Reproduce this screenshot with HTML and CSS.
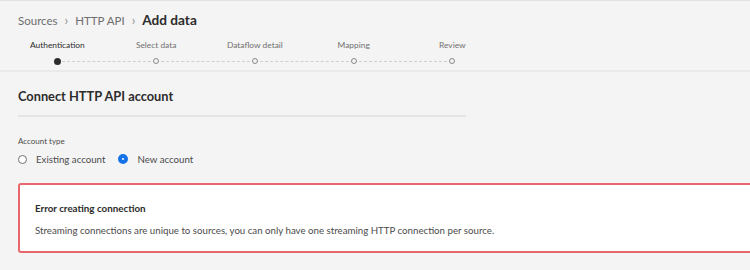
FILE: index.html
```html
<!DOCTYPE html>
<html lang="en">
<head>
    <meta charset="UTF-8">
    <title>Add data</title>
    <link rel="stylesheet" href="styles.css">
</head>
<body>
    <div class="header">
        <div class="breadcrumbs">
            <span class="crumb">Sources</span>
            <span class="chevron">&#8250;</span>
            <span class="crumb">HTTP API</span>
            <span class="chevron">&#8250;</span>
            <span class="crumb current">Add data</span>
        </div>
        <div class="steps">
            <div class="step active">
                <div class="step-label">Authentication</div>
                <div class="step-dot"></div>
            </div>
            <div class="step">
                <div class="step-label">Select data</div>
                <div class="step-dot"></div>
            </div>
            <div class="step">
                <div class="step-label">Dataflow detail</div>
                <div class="step-dot"></div>
            </div>
            <div class="step">
                <div class="step-label">Mapping</div>
                <div class="step-dot"></div>
            </div>
            <div class="step last">
                <div class="step-label">Review</div>
                <div class="step-dot"></div>
            </div>
        </div>
    </div>

    <div class="content">
        <h2 class="section-title">Connect HTTP API account</h2>

        <div class="field-label">Account type</div>
        <div class="radio-group">
            <label class="radio">
                <span class="radio-circle"></span>
                Existing account
            </label>
            <label class="radio checked">
                <span class="radio-circle"></span>
                New account
            </label>
        </div>

        <div class="error-box">
            <div class="error-title">Error creating connection</div>
            <div class="error-text">Streaming connections are unique to sources, you can only have one streaming HTTP connection per source.</div>
        </div>
    </div>
</body>
</html>
```

FILE: styles.css
```css
body {
    margin: 0;
    font-family: 'Lato', 'Open Sans', sans-serif;
    background-color: #f4f4f4;
    color: #2c2c2c;
    overflow: hidden;
}
.header {
    border-top: 1px solid #e1e1e1;
    border-bottom: 2px solid #eaeaea;
    height: 72px;
    box-sizing: border-box;
    padding: 10px 18px 0;
}
.breadcrumbs {
    display: flex;
    align-items: center;
    font-size: 11.5px;
    height: 18px;
}
.crumb {
    color: #6e6e6e;
}
.crumb.current {
    color: #2c2c2c;
    font-weight: bold;
    font-size: 13.6px;
}
.chevron {
    color: #8e8e8e;
    margin: 0 7px;
    font-size: 13px;
}
.steps {
    display: flex;
    margin-top: 11px;
    margin-left: -10px;
}
.step {
    width: 98.75px;
    display: flex;
    flex-direction: column;
    align-items: center;
    position: relative;
}
.step-label {
    font-size: 8.4px;
    color: #707070;
    height: 12px;
    white-space: nowrap;
}
.step.active .step-label {
    color: #2c2c2c;
}
.step-dot {
    margin-top: 6px;
    width: 4px;
    height: 4px;
    border: 1.5px solid #8a8a8a;
    border-radius: 50%;
    background: #f4f4f4;
    position: relative;
    z-index: 1;
}
.step.active .step-dot {
    width: 7px;
    height: 7px;
    border: none;
    background: #2c2c2c;
}
.step::after {
    content: '';
    position: absolute;
    left: 50%;
    width: 100%;
    top: 21px;
    border-top: 1px dashed #cfcfcf;
}
.step.last::after {
    display: none;
}
.content {
    padding: 16px 18px 0;
}
.section-title {
    margin: 0;
    width: 448px;
    font-size: 12.8px;
    font-weight: bold;
    color: #2c2c2c;
    padding-bottom: 11px;
    border-bottom: 2px solid #e4e4e4;
}
.field-label {
    margin-top: 19px;
    font-size: 8px;
    color: #4b4b4b;
}
.radio-group {
    display: flex;
    gap: 13px;
    margin-top: 7px;
}
.radio {
    display: flex;
    align-items: center;
    gap: 9px;
    font-size: 9.7px;
    color: #4b4b4b;
}
.radio-circle {
    width: 7px;
    height: 7px;
    border: 1.5px solid #707070;
    border-radius: 50%;
    background: #fff;
}
.radio.checked .radio-circle {
    width: 2px;
    height: 2px;
    border: 4px solid #1473e6;
}
.error-box {
    margin-top: 18px;
    width: 760px;
    height: 70px;
    background: #ffffff;
    border: 2px solid #e8676d;
    border-radius: 3px;
    padding: 17px 15px 0;
    box-sizing: border-box;
}
.error-title {
    font-size: 9.8px;
    font-weight: bold;
    color: #2c2c2c;
}
.error-text {
    margin-top: 10px;
    font-size: 9.7px;
    color: #4b4b4b;
}
```
